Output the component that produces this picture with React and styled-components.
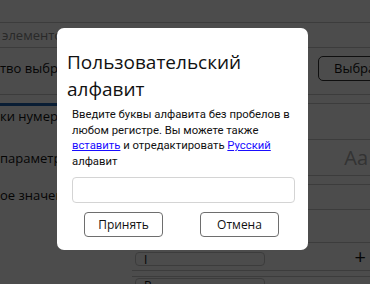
import React from "react"
import styled, { createGlobalStyle } from "styled-components"

const GlobalStyle = createGlobalStyle`
  html, body {
    margin: 0;
    padding: 0;
    background: #ffffff;
    overflow: hidden;
  }
  body {
    font-family: "Segoe UI", "Open Sans", "Noto Sans", sans-serif;
    color: #212529;
  }
`

const App = () => {
  return (
    <>
      <GlobalStyle />
      <Page>
        <Header />
        <SearchRow>
          <Placeholder>элементов</Placeholder>
        </SearchRow>
        <CountRow>
          <Label>тво выбранных</Label>
          <PickButton>Выбрать</PickButton>
        </CountRow>
        <Tabs>
          <ActiveTab />
        </Tabs>
        <Settings>
          <SettingRow height={34}>
            <Label top>ки нумерации</Label>
            <Field />
          </SettingRow>
          <SettingRow height={36}>
            <Label>параметр</Label>
            <Field>
              <Sample>Aa</Sample>
            </Field>
          </SettingRow>
          <SettingRow height={9}>
            <span />
            <Field />
          </SettingRow>
          <SettingRow height={25}>
            <Label top>ое значение</Label>
            <Field />
          </SettingRow>
          <SettingRow height={33}>
            <span />
            <Field />
          </SettingRow>
          <SettingRow height={26}>
            <span />
            <Field>
              <Chip>I</Chip>
              <Plus>+</Plus>
            </Field>
          </SettingRow>
          <SettingRow height={8}>
            <span />
            <Field />
          </SettingRow>
          <SettingRow height={20}>
            <span />
            <Field>
              <Chip>B</Chip>
            </Field>
          </SettingRow>
        </Settings>
      </Page>

      <Overlay>
        <Dialog>
          <Title>Пользовательский алфавит</Title>
          <Body>
            <Text>
              Введите буквы алфавита без пробелов в любом регистре. Вы можете
              также <Link href="#">вставить</Link> и отредактировать{" "}
              <Link href="#">Русский</Link> алфавит
            </Text>
            <Input type="text" />
            <Actions>
              <Button>Принять</Button>
              <Button>Отмена</Button>
            </Actions>
          </Body>
        </Dialog>
      </Overlay>
    </>
  )
}

const Page = styled.div`
  width: 370px;
  height: 284px;
  font-size: 13px;
  color: #111;
`

const Header = styled.div`
  height: 22px;
  border-bottom: 1px solid #c8c8c8;
`

const SearchRow = styled.div`
  height: 24px;
  display: flex;
  align-items: center;
  padding-left: 2px;
  border-bottom: 1px solid #c8c8c8;
`

const Placeholder = styled.span`
  color: #8a8a8a;
`

const CountRow = styled.div`
  height: 40px;
  padding-bottom: 6px;
  display: flex;
  align-items: center;
  justify-content: space-between;
  border-bottom: 1px solid #c8c8c8;
`

const Label = styled.span`
  align-self: ${(props) => (props.top ? "flex-start" : "center")};
  padding-top: ${(props) => (props.top ? "1px" : "0")};
  white-space: nowrap;
`

const PickButton = styled.button`
  font: inherit;
  height: 25px;
  width: 80px;
  margin-right: -28px;
  text-align: left;
  padding: 0 0 0 15px;
  background: #fff;
  color: #111;
  border: 1px solid #333;
  border-radius: 5px;
`

const Tabs = styled.div`
  height: 8px;
  border-bottom: 1px solid #c8c8c8;
  display: flex;
  align-items: flex-end;
`

const ActiveTab = styled.div`
  width: 160px;
  height: 3px;
  margin-bottom: -3px;
  background: #1e63b0;
`

const Settings = styled.div`
  display: flex;
  flex-direction: column;
  padding-top: 2px;
`

const SettingRow = styled.div`
  display: grid;
  grid-template-columns: 132px 1fr;
  height: ${(props) => props.height}px;
`

const Field = styled.div`
  border-bottom: 1px solid #c8c8c8;
  display: flex;
  align-items: center;
  justify-content: space-between;
  padding-right: 2px;
`

const Sample = styled.span`
  margin-left: auto;
  font-size: 20px;
  color: #aaa;
`

const Chip = styled.span`
  align-self: flex-end;
  width: 120px;
  height: 12px;
  margin-left: 3px;
  margin-bottom: 4px;
  border: 1px solid #c8c8c8;
  border-radius: 4px;
  padding-left: 8px;
  font-size: 12px;
  line-height: 14px;
`

const Plus = styled.span`
  font-size: 20px;
  color: #111;
  margin-right: 2px;
`

const Overlay = styled.div`
  position: fixed;
  inset: 0;
  background: rgba(0, 0, 0, 0.7);
`

const Dialog = styled.div`
  position: absolute;
  left: 57px;
  top: 28px;
  width: 251px;
  height: 222px;
  box-sizing: border-box;
  background: #fff;
  border-radius: 7px;
  padding: 21px 10px 0 10px;
`

const Title = styled.h2`
  margin: 0;
  font-size: 19px;
  font-weight: 400;
  line-height: 27px;
  color: #111;
`

const Body = styled.div`
  padding: 4px 5px 0 5px;
`

const Text = styled.p`
  margin: 0;
  width: 231px;
  font-family: Roboto, "Open Sans", sans-serif;
  font-size: 11.3px;
  line-height: 15.5px;
  color: #111;
`

const Link = styled.a`
  color: #1a0dff;
  text-decoration: underline;
`

const Input = styled.input`
  display: block;
  box-sizing: border-box;
  width: 223px;
  height: 26px;
  margin-top: 8px;
  border: 1px solid #d4d4d4;
  border-radius: 4px;
  outline: none;
`

const Actions = styled.div`
  display: flex;
  justify-content: space-between;
  padding: 9px 14px 0 12px;
`

const Button = styled.button`
  font: inherit;
  font-size: 12px;
  width: 79px;
  height: 25px;
  background: #fff;
  color: #111;
  border: 1px solid #6e6e6e;
  border-radius: 4px;
  padding: 0;
`

export default App
